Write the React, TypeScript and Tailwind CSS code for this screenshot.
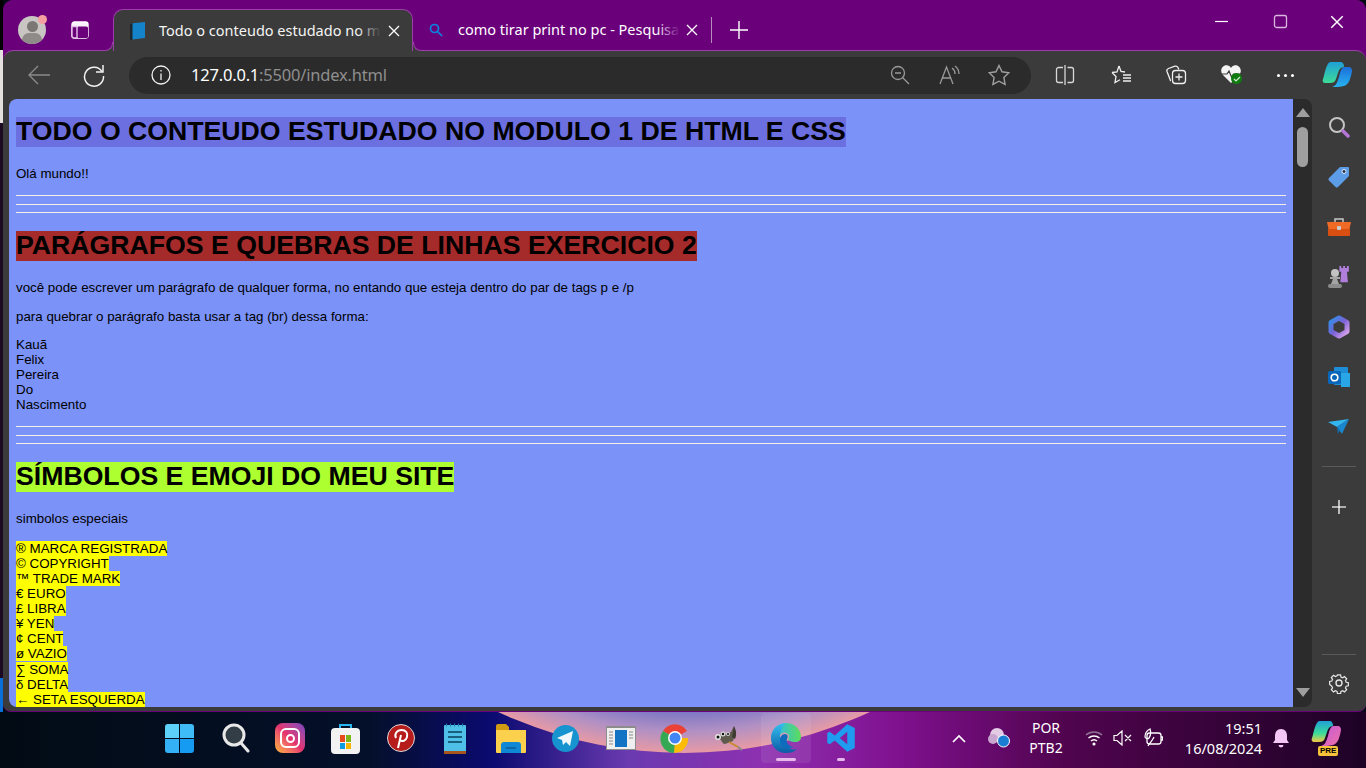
import React from 'react';

const arial = 'font-["Liberation_Sans",Arial,sans-serif]';
const segoe = 'font-["Noto_Sans","Open_Sans",sans-serif]';

const symbols = [
  { text: '® MARCA REGISTRADA' },
  { text: '© COPYRIGHT' },
  { text: '™ TRADE MARK' },
  { text: '€ EURO' },
  { text: '£ LIBRA' },
  { text: '¥ YEN' },
  { text: '¢ CENT' },
  { text: 'ø VAZIO' },
  { text: '∑ SOMA', gap: true },
  { text: 'δ DELTA' },
  { text: '← SETA ESQUERDA' }
];

function TripleRule() {
  return (
    <div className="flex flex-col">
      <div className="h-px bg-[#f4f1e8]" />
      <div className="mt-[8px] h-px bg-[#f4f1e8]" />
      <div className="mt-[7px] h-px bg-[#f4f1e8]" />
    </div>
  );
}

function Heading({ className, children }: { className: string; children: React.ReactNode }) {
  return <h1 className={`w-fit pb-[2px] text-[26.67px] leading-[28px] font-bold text-black ${className}`}>{children}</h1>;
}

function Close({ size = 14 }: { size?: number }) {
  return (
    <svg width={size} height={size} viewBox="0 0 14 14" fill="none" stroke="#fff" strokeWidth="1.3" className="shrink-0">
      <path d="M2 2l10 10M12 2L2 12" />
    </svg>
  );
}

function TabStrip() {
  return (
    <div className="relative z-10 flex h-[50px] shrink-0 items-end bg-[#6b007b]">
      <div className="flex h-[50px] w-[110px] shrink-0 items-center gap-[26px] pl-[15px] pt-[10px]">
        <div className="relative h-7 w-7 shrink-0">
          <div className="relative h-7 w-7 overflow-hidden rounded-full bg-[#c9c5c3]">
            <div className="absolute left-[9px] top-[5px] h-[11px] w-[11px] rounded-full bg-[#7b7775]" />
            <div className="absolute left-[4px] top-[17px] h-[14px] w-[20px] rounded-full bg-[#8f8b89]" />
          </div>
          <div className="absolute -right-[1px] -top-[1px] h-[9px] w-[9px] rounded-full bg-[#f4a0a0]" />
        </div>
        <svg width="18" height="18" viewBox="0 0 18 18" fill="none" strokeWidth="1.4" className="-ml-[1px] shrink-0">
          <rect x="1" y="1" width="16" height="16" rx="2.5" stroke="#fff" fill="#f8f0fa" />
          <rect x="6" y="5.5" width="11" height="11.500" rx="1.500" fill="#6b007b" />
          <path d="M1 5.500V15a2 2 0 0 0 2 2h3V5.500z" fill="#6b007b" stroke="#e6c4ea" />
        </svg>
      </div>
      <div className="relative -mb-px flex h-[42px] w-[300px] shrink-0 items-center rounded-t-[10px] border-x border-t border-[#9a3fa8] bg-[#3b3b3b] pl-[15px]">
        <div className="absolute -left-[9px] bottom-0 h-[9px] w-[8px] bg-[#3b3b3b]">
          <div className="h-full w-full rounded-br-[8px] border-r border-b border-[#9a3fa8] bg-[#6b007b]" />
        </div>
        <div className="absolute -right-[9px] bottom-0 h-[9px] w-[8px] bg-[#3b3b3b]">
          <div className="h-full w-full rounded-bl-[8px] border-l border-b border-[#9a3fa8] bg-[#6b007b]" />
        </div>
        <svg width="17" height="20" viewBox="0 0 17 20" className="shrink-0">
          <path d="M1 3.500L4 2v16l-3 1.500z" fill="#1d2730" />
          <path d="M3.500 2.200L16 1v16L3.500 18.500z" fill="#1583c9" />
        </svg>
        <div className={`relative ml-[13px] w-[219px] shrink-0 whitespace-nowrap text-[14.5px] text-[#f4f4f4] ${segoe}`}>
          Todo o conteudo estudado no m
          <div className="absolute inset-y-0 -right-[3px] w-[24px] bg-gradient-to-l from-[#3b3b3b] to-transparent" />
        </div>
        <span className="ml-[9px]">
          <Close />
        </span>
      </div>
      <div className="flex h-[41px] shrink-0 items-center pl-[16px]">
        <svg width="14" height="14" viewBox="0 0 14 14" fill="none" stroke="#0a84e0" strokeWidth="1.700" className="shrink-0">
          <circle cx="5.500" cy="5.500" r="4" />
          <path d="M8.500 8.500L13 13" />
        </svg>
        <div className={`relative ml-[15px] w-[219px] shrink-0 whitespace-nowrap text-[14.5px] text-white ${segoe}`}>
          como tirar print no pc - Pesquisa
          <div className="absolute inset-y-0 -right-[3px] w-[24px] bg-gradient-to-l from-[#6b007b] to-transparent" />
        </div>
        <span className="ml-[8px]">
          <Close />
        </span>
        <div className="ml-[12px] h-[26px] w-px bg-[#b98ac0]" />
        <svg width="18" height="18" viewBox="0 0 18 18" stroke="#fff" strokeWidth="1.400" className="ml-[18px] shrink-0">
          <path d="M9 0v18M0 9h18" />
        </svg>
      </div>
      <div className="flex h-[50px] flex-1 items-start justify-end pr-[21px] pt-[14px]">
        <svg width="16" height="16" viewBox="0 0 16 16" stroke="#fff" strokeWidth="1.200">
          <path d="M2 7.500h13" />
        </svg>
        <svg width="16" height="16" viewBox="0 0 16 16" fill="none" stroke="#d9b6de" strokeWidth="1.300" className="ml-[44px]">
          <rect x="1.500" y="1.500" width="12" height="12" rx="2" />
        </svg>
        <span className="ml-[40px]">
          <Close size={16} />
        </span>
      </div>
    </div>
  );
}

function Toolbar() {
  return (
    <div className="flex h-[49px] shrink-0 items-center rounded-t-[10px] border-t border-[#9a3fa8] bg-[#3b3b3b] pr-[12px]">
      <svg width="24" height="24" viewBox="0 0 24 24" fill="none" stroke="#8a8a8a" strokeWidth="1.400" className="ml-[24px] shrink-0">
        <path d="M23 12H2M11 3l-9 9 9 9" />
      </svg>
      <svg width="24" height="24" viewBox="0 0 24 24" fill="none" stroke="#f2f2f2" strokeWidth="1.500" className="ml-[31px] shrink-0">
        <path d="M20 8.500A9.500 9.500 0 1 0 21.500 13" />
        <path d="M21 2v7h-7" />
      </svg>
      <div className="ml-[23px] flex h-[37px] w-[902px] shrink-0 items-center rounded-full bg-[#2b2b2b] pl-[22px]">
        <svg width="20" height="20" viewBox="0 0 20 20" fill="none" stroke="#f2f2f2" strokeWidth="1.300" className="shrink-0">
          <circle cx="10" cy="10" r="9" />
          <path d="M10 8.500V15M10 5v1.500" />
        </svg>
        <div className={`ml-[20px] text-[16.5px] tracking-[-0.2px] ${segoe}`}>
          <span className="text-white">127.0.0.1</span>
          <span className="text-[#8f8f8f]">:5500/index.html</span>
        </div>
        <svg width="20" height="20" viewBox="0 0 20 20" fill="none" stroke="#9a9a9a" strokeWidth="1.300" className="ml-auto shrink-0">
          <circle cx="8" cy="8" r="6.500" />
          <path d="M12.500 12.500L19 19M5 8h6" />
        </svg>
        <svg width="22" height="22" viewBox="0 0 22 22" fill="none" stroke="#9a9a9a" strokeWidth="1.300" className="ml-[29px] shrink-0">
          <path d="M1 20L7.500 3 14 20M3.500 14h8M13 4a7 7 0 0 1 3 6M16 2a10 10 0 0 1 4 8" />
        </svg>
        <svg width="22" height="22" viewBox="0 0 22 22" fill="none" stroke="#a0a0a0" strokeWidth="1.400" className="ml-[27px] mr-[21px] shrink-0">
          <path d="M11 1.500l3 6.300 6.900.9-5 4.800 1.200 6.900L11 17.200l-6.100 3.200 1.200-6.900-5-4.800 6.900-.9z" />
        </svg>
      </div>
      <svg width="20" height="20" viewBox="0 0 20 20" fill="none" stroke="#d8d8d8" strokeWidth="1.300" className="ml-[24px] shrink-0">
        <path d="M8 2.500H3.500a2 2 0 0 0-2 2v11a2 2 0 0 0 2 2H8M12.500 2.500h4a2 2 0 0 1 2 2v11a2 2 0 0 1-2 2h-4M10 0v20" />
      </svg>
      <svg width="22" height="22" viewBox="0 0 22 22" fill="none" stroke="#f0f0f0" strokeWidth="1.300" className="ml-[35px] shrink-0">
        <path d="M9 2l2 5.500 4 .5M2 8.500l5-.6L9 2M2 8.500l4 4-1 6 5-2.800M13 11h8M13 14h8M13 17h8" />
      </svg>
      <svg width="22" height="22" viewBox="0 0 22 22" fill="none" stroke="#f0f0f0" strokeWidth="1.300" className="ml-[33px] shrink-0">
        <path d="M6 16.500H5.500L2 7.500c-.5-1.500.2-2.500 1.500-3L10 2.200c1.300-.4 2.300 0 3 1.300l.8 2" />
        <rect x="7.500" y="6.500" width="13" height="13" rx="3" />
        <path d="M14 9.500v7M10.500 13h7" />
      </svg>
      <div className="relative ml-[33px] h-[22px] w-[24px] shrink-0">
        <svg width="22" height="20" viewBox="0 0 22 20">
          <path d="M11 19L2.500 10.500C-1 6 3 0 8 1.500 9.500 2 10.500 3 11 4c.5-1 1.500-2 3-2.500C19 0 23 6 19.500 10.500z" fill="#f4f4f4" />
          <path d="M1 10h6l2-3 2.500 6 2-3h7" fill="none" stroke="#3b3b3b" strokeWidth="1.200" />
        </svg>
        <div className="absolute left-[11px] top-[9px] flex h-[11px] w-[11px] items-center justify-center rounded-full bg-[#107c10]">
          <svg width="8" height="8" viewBox="0 0 8 8" fill="none" stroke="#cfe9cf" strokeWidth="1.200">
            <path d="M1 4l2 2 4-4" />
          </svg>
        </div>
      </div>
      <div className="ml-[33px] flex shrink-0 gap-[4px]">
        <div className="h-[3px] w-[3px] rounded-full bg-white" />
        <div className="h-[3px] w-[3px] rounded-full bg-white" />
        <div className="h-[3px] w-[3px] rounded-full bg-white" />
      </div>
      <svg width="30" height="28" viewBox="0 0 30 28" className="ml-[28px] shrink-0">
        <defs>
          <linearGradient id="cpA" x1="0" y1="0" x2="0" y2="1">
            <stop offset="0" stopColor="#1f9fd8" />
            <stop offset="1" stopColor="#3ddc97" />
          </linearGradient>
          <linearGradient id="cpB" x1="0" y1="0" x2="0" y2="1">
            <stop offset="0" stopColor="#1c6fdc" />
            <stop offset="1" stopColor="#27b3ee" />
          </linearGradient>
        </defs>
        <path d="M22 6h5c2 0 3 2 3 4-1 6-3 14-8 15-3 1-9 1-12 1 4-1 5-4 7-10 1-4 2-9 5-10z" fill="url(#cpB)" />
        <path d="M8 1h10c3 0 4 2 4 5-3 0-5 2-6 6l-2 6c-1 3-3 4-6 4H3c-2 0-3-2-2-4C3 12 4 3 8 1z" fill="url(#cpA)" />
      </svg>
    </div>
  );
}

function Page() {
  return (
    <div className={`flex-1 overflow-hidden rounded-l-[8px] bg-[#7b92f8] pl-[7px] pr-[7px] pt-[18px] text-[13.33px] leading-[15px] text-black ${arial}`}>
      <Heading className="bg-[#6b6fe0]">TODO O CONTEUDO ESTUDADO NO MODULO 1 DE HTML E CSS</Heading>
      <p className="mt-[19px]">Olá mundo!!</p>
      <div className="mt-[14px]">
        <TripleRule />
      </div>
      <Heading className="mt-[18px] bg-[#a52a2a]">PARÁGRAFOS E QUEBRAS DE LINHAS EXERCICIO 2</Heading>
      <p className="mt-[19px]">você pode escrever um parágrafo de qualquer forma, no entando que esteja dentro do par de tags p e /p</p>
      <p className="mt-[14px]">para quebrar o parágrafo basta usar a tag (br) dessa forma:</p>
      <p className="mt-[13px]">
        Kauã
        <br />
        Felix
        <br />
        Pereira
        <br />
        Do
        <br />
        Nascimento
      </p>
      <div className="mt-[14px]">
        <TripleRule />
      </div>
      <Heading className="mt-[18px] bg-[#adff2f]">SÍMBOLOS E EMOJI DO MEU SITE</Heading>
      <p className="mt-[19px]">simbolos especiais</p>
      <div className="mt-[15px] flex flex-col items-start">
        {symbols.map((item) => (
          <span key={item.text} className={item.gap ? 'mt-px bg-[#ffff00]' : 'bg-[#ffff00]'}>
            {item.text}
          </span>
        ))}
      </div>
    </div>
  );
}

function Scrollbar() {
  return (
    <div className="flex w-[19px] shrink-0 flex-col items-center rounded-r-[8px] bg-[#2b2b2b] pt-[9px]">
      <div className="h-0 w-0 border-x-[7px] border-b-[9px] border-x-transparent border-b-[#9e9e9e]" />
      <div className="mt-[10px] h-[40px] w-[11px] rounded-full bg-[#9f9f9f]" />
      <div className="mt-auto mb-[10px] h-0 w-0 border-x-[7px] border-t-[9px] border-x-transparent border-t-[#9e9e9e]" />
    </div>
  );
}

function SidebarIcon({ children }: { children: React.ReactNode }) {
  return <div className="flex h-[50px] shrink-0 items-center justify-center">{children}</div>;
}

function Sidebar() {
  return (
    <div className="flex w-[54px] shrink-0 flex-col bg-[#3b3b3b] pt-[3px]">
      <SidebarIcon>
        <svg width="22" height="22" viewBox="0 0 22 22" fill="none">
          <circle cx="9" cy="9" r="7" stroke="#c4c4c4" strokeWidth="2" />
          <path d="M15 15l5 5" stroke="#b475d6" strokeWidth="3.500" strokeLinecap="round" />
        </svg>
      </SidebarIcon>
      <SidebarIcon>
        <svg width="24" height="24" viewBox="0 0 24 24">
          <path d="M13 2h8c1 0 1 1 1 1v8L11 22c-1 .8-1.500.8-2.500 0L2 15.500c-.8-1-.8-1.500 0-2.500z" fill="#5d9de8" />
          <circle cx="17" cy="6.500" r="2" fill="#22304a" stroke="#e8f0fa" />
        </svg>
      </SidebarIcon>
      <SidebarIcon>
        <svg width="24" height="20" viewBox="0 0 24 20">
          <path d="M8 5V2h8v3" fill="none" stroke="#c9c9c9" strokeWidth="1.500" />
          <path d="M0 5h24l-1.500 7h-21z" fill="#ef6a24" />
          <path d="M1 12h22v6a1 1 0 0 1-1 1H2a1 1 0 0 1-1-1z" fill="#d94f12" />
          <rect x="10" y="9" width="4" height="4" rx="1" fill="#c9c9c9" />
        </svg>
      </SidebarIcon>
      <SidebarIcon>
        <svg width="24" height="24" viewBox="0 0 24 24">
          <circle cx="8" cy="8" r="4" fill="#c2c2c2" />
          <path d="M3 12h10v2H3zM6 14h4l2 5H4z" fill="#a4a4a4" />
          <rect x="1" y="19" width="14" height="4" rx="2" fill="#8c8c8c" />
          <path d="M13 0h2v2h2V0h2v2h2V0h2v6h-2l1 11H14l1-11h-2z" fill="#b07fdc" transform="translate(0 1) scale(.95)" />
        </svg>
      </SidebarIcon>
      <SidebarIcon>
        <svg width="22" height="24" viewBox="0 0 22 24" fill="none">
          <defs>
            <linearGradient id="m365" x1="0" y1="0" x2="1" y2="1">
              <stop offset="0" stopColor="#2f8fe8" />
              <stop offset=".5" stopColor="#7b61d8" />
              <stop offset="1" stopColor="#e0a8ec" />
            </linearGradient>
          </defs>
          <path d="M11 3l8 4.500v9L11 21l-8-4.500v-9z" stroke="url(#m365)" strokeWidth="5" strokeLinejoin="round" />
        </svg>
      </SidebarIcon>
      <SidebarIcon>
        <svg width="22" height="20" viewBox="0 0 22 20">
          <rect x="6" y="0" width="14" height="18" rx="1" fill="#1c8dd6" />
          <rect x="13" y="6" width="9" height="14" fill="#29a6e6" />
          <rect x="0" y="4" width="13" height="13" rx="1.500" fill="#0a66b8" />
          <circle cx="6.500" cy="10.500" r="3.300" fill="none" stroke="#fff" strokeWidth="1.600" />
        </svg>
      </SidebarIcon>
      <SidebarIcon>
        <svg width="22" height="16" viewBox="0 0 22 16">
          <path d="M0 3l21-3-12 8z" fill="#33b5ef" />
          <path d="M21 0L14 15 9 8z" fill="#1887cf" />
          <path d="M9 8l1 7 2-4z" fill="#0f6fb0" />
        </svg>
      </SidebarIcon>
      <div className="mx-[10px] mt-[14px] h-px shrink-0 bg-[#5a5a5a]" />
      <div className="mt-[32px] flex justify-center">
        <svg width="16" height="16" viewBox="0 0 16 16" strokeWidth="1.300">
          <path d="M1 8h14" stroke="#b0b0b0" strokeWidth="2" />
          <path d="M8 1v14" stroke="#fff" />
        </svg>
      </div>
      <div className="mx-[10px] mt-auto h-px shrink-0 bg-[#5a5a5a]" />
      <div className="flex h-[52px] shrink-0 items-center justify-center pt-[4px]">
        <svg width="22" height="22" viewBox="0 0 22 22" fill="none" stroke="#e4e4e4" strokeWidth="1.400">
          <circle cx="11" cy="11" r="3" />
          <path d="M9.300 2h3.400l.5 2.400 1.800.8 2.100-1.300 2.400 2.400-1.300 2.100.8 1.800 2.400.5v3.400l-2.400.5-.8 1.800 1.300 2.100-2.400 2.400-2.100-1.300-1.800.8-.5 2.400H9.300l-.5-2.400-1.800-.8-2.100 1.300-2.400-2.400 1.300-2.100-.8-1.800L.6 12.700V9.300L3 8.800l.8-1.800-1.300-2.100 2.400-2.400L7 3.800l1.800-.8z" transform="translate(1.100 1.100) scale(.9)" />
        </svg>
      </div>
    </div>
  );
}

function TaskbarIcons() {
  return (
    <div className="flex items-center">
      <div className="flex w-[56px] justify-center">
        <div className="grid h-[29px] w-[29px] grid-cols-2 gap-[1px]">
          <div className="rounded-tl-[3px] bg-[#5ed1fb]" />
          <div className="rounded-tr-[3px] bg-[#3fbcf8]" />
          <div className="rounded-bl-[3px] bg-[#34b0f6]" />
          <div className="rounded-br-[3px] bg-[#169bf2]" />
        </div>
      </div>
      <div className="flex w-[58px] justify-center">
        <svg width="28" height="30" viewBox="0 0 28 30" fill="none">
          <circle cx="12" cy="12" r="10" fill="#333d46" stroke="#e8e8e8" strokeWidth="3" />
          <path d="M19 20l7 8" stroke="#e8e8e8" strokeWidth="3" strokeLinecap="round" />
        </svg>
      </div>
      <div className="flex w-[50px] justify-center">
        <div className="flex h-[30px] w-[30px] shrink-0 items-center justify-center rounded-[8px] bg-gradient-to-tr from-[#fdb32a] via-[#e5306e] to-[#7a3fc4]">
          <div className="flex h-[20px] w-[20px] items-center justify-center rounded-[6px] border-2 border-white">
            <div className="h-[9px] w-[9px] rounded-full border-2 border-white" />
          </div>
        </div>
      </div>
      <div className="flex w-[60px] justify-center">
        <svg width="29" height="31" viewBox="0 0 29 31">
          <path d="M9 6V2h11v4" fill="none" stroke="#2bb5ee" strokeWidth="2" />
          <rect x="0" y="5" width="29" height="26" rx="4" fill="#f2f2f2" />
          <rect x="9" y="12" width="5" height="7" fill="#e8491d" />
          <rect x="15" y="12" width="5" height="7" fill="#7cb518" />
          <rect x="9" y="20" width="5" height="6" fill="#0f9be0" />
          <rect x="15" y="20" width="5" height="6" fill="#f7b500" />
        </svg>
      </div>
      <div className="flex w-[52px] justify-center">
        <svg width="28" height="28" viewBox="0 0 28 28">
          <circle cx="14" cy="14" r="13.500" fill="#b71c1c" stroke="#d8d8d8" />
          <path d="M11 24l3-13M9 14c-2-4 1-8 5.500-8S21 9 20 13s-5 5-7 3" fill="none" stroke="#fff" strokeWidth="2" />
        </svg>
      </div>
      <div className="flex w-[56px] justify-center">
        <svg width="22" height="31" viewBox="0 0 22 31">
          <rect x="0" y="2" width="22" height="29" rx="1" fill="#4fc0e8" />
          <rect x="0" y="28" width="22" height="3" fill="#a8561e" />
          <path d="M4 9h14M4 14h14M4 19h14" stroke="#17617f" strokeWidth="2" />
          <path d="M2 2h1M6 2h1M10 2h1M14 2h1M18 2h1" stroke="#1d7fa8" strokeWidth="3" />
        </svg>
      </div>
      <div className="flex w-[56px] justify-center">
        <svg width="30" height="29" viewBox="0 0 30 29">
          <path d="M0 2a2 2 0 0 1 2-2h8l3 3v4H0z" fill="#d09a12" />
          <path d="M0 6h30v22a1 1 0 0 1-1 1H1a1 1 0 0 1-1-1z" fill="#fbd04c" />
          <path d="M5 29v-8a3 3 0 0 1 3-3h14a3 3 0 0 1 3 3v8z" fill="#0e88d4" />
          <path d="M10 24h10" stroke="#0a5c94" strokeWidth="1.500" />
        </svg>
      </div>
      <div className="flex w-[52px] justify-center">
        <div className="flex h-[27px] w-[27px] shrink-0 items-center justify-center rounded-full bg-[#1794d0]">
          <svg width="16" height="15" viewBox="0 0 16 15">
            <path d="M0 7L16 0l-3 15-4-4-3 3-1-5z" fill="#f0f8fc" />
          </svg>
        </div>
      </div>
      <div className="flex w-[60px] justify-center">
        <svg width="30" height="24" viewBox="0 0 30 24">
          <rect x=".5" y=".5" width="29" height="23" fill="#efefef" stroke="#8c8c8c" />
          <rect x="0" y="0" width="30" height="2" fill="#8c8c8c" />
          <rect x="9" y="4" width="12" height="17" fill="#1272c4" />
          <path d="M3 6h4M3 9h4M3 12h4M3 15h4M3 18h4M23 6h4M23 9h4M23 12h4" stroke="#8a8a8a" strokeWidth="1.200" />
        </svg>
      </div>
      <div className="flex w-[48px] justify-center">
        <svg width="30" height="30" viewBox="0 0 30 30" className="shrink-0">
          <path d="M15 15L3 8a14 14 0 0 1 24 0z" fill="#ea4335" />
          <path d="M15 15H28a14 14 0 0 1-14 15z" fill="#fbbc05" />
          <path d="M15 15L3 8a14 14 0 0 0 11 22z" fill="#34a853" />
          <circle cx="15" cy="15" r="7" fill="#fff" />
          <circle cx="15" cy="15" r="5.500" fill="#4285f4" />
        </svg>
      </div>
      <div className="flex w-[62px] justify-center">
        <svg width="30" height="26" viewBox="0 0 30 26">
          <path d="M1 12l5-3 5 0 5-2 3-6 1 9-2 6-8 3c-2 0-3-2-4-4z" fill="#5f5a4e" />
          <path d="M19 1c2 4 3 8 1 13l-3-2z" fill="#3f3b33" />
          <circle cx="3" cy="12" r="3" fill="#e4e4e4" />
          <circle cx="3" cy="12" r="1.500" fill="#111" />
          <circle cx="8" cy="9" r="2.500" fill="#d8d8d8" />
          <circle cx="8" cy="9" r="1.200" fill="#111" />
          <circle cx="13" cy="9" r="2" fill="#d8d8d8" />
          <circle cx="13" cy="9" r="1" fill="#111" />
          <path d="M14 17l9 5" stroke="#c8892c" strokeWidth="2" />
          <path d="M23 22l4 3" stroke="#888" strokeWidth="2" />
        </svg>
      </div>
      <div className="relative flex h-[50px] w-[50px] justify-center rounded-[4px] bg-[#ffffff14] pt-[10px]">
        <svg width="30" height="30" viewBox="0 0 30 30">
          <defs>
            <linearGradient id="edgeA" x1="0" y1="0" x2="0" y2="1">
              <stop offset="0" stopColor="#35c1f1" />
              <stop offset="1" stopColor="#0c59a4" />
            </linearGradient>
            <linearGradient id="edgeB" x1="0" y1="0" x2="1" y2="0">
              <stop offset="0" stopColor="#35c1d0" />
              <stop offset="1" stopColor="#5ddc5a" />
            </linearGradient>
          </defs>
          <path d="M15 0C6 0 0 7 0 15c0 9 7 15 15 15 4 0 8-1 11-4-4 1-9 0-11-3-2-4-1-7 2-9H9C9 9 12 6 15 4z" fill="url(#edgeA)" />
          <path d="M15 0c8 0 15 6 15 14 0 3-2 5-6 5-3 0-7-1-7-3 2-2 1-5-2-6-2-1-4 0-6 2C10 6 12 1 15 0z" fill="url(#edgeB)" />
          <path d="M9 17c0-3 2-6 5-6 3 0 3 3 2 5-1 3 1 7 6 8-3 3-13 2-13-7z" fill="#0f6cbd" />
        </svg>
        <div className="absolute bottom-[2px] left-[15px] h-[3px] w-[20px] rounded-full bg-[#e6b8ec]" />
      </div>
      <div className="relative flex h-[50px] w-[60px] justify-center pt-[10px]">
        <svg width="30" height="30" viewBox="0 0 24 24">
          <path d="M17 1l6 3v16l-6 3-10-9-4 3-2-1V8l2-1 4 3zM17 7l-6 5 6 5z" fill="#1f9cf0" fillRule="evenodd" />
        </svg>
        <div className="absolute bottom-[2px] left-[26px] h-[3px] w-[8px] rounded-full bg-[#e6b8ec]" />
      </div>
    </div>
  );
}

function Tray() {
  return (
    <div className={`absolute right-[25px] top-0 flex h-full items-center pb-[4px] text-white ${segoe}`}>
      <svg width="14" height="9" viewBox="0 0 14 9" fill="none" stroke="#fff" strokeWidth="1.700">
        <path d="M1 8l6-6 6 6" />
      </svg>
      <svg width="22" height="20" viewBox="0 0 22 20" className="ml-[22px]">
        <circle cx="9" cy="7" r="7" fill="#e3cbe6" />
        <circle cx="5" cy="11" r="5" fill="#c8a6cf" />
        <circle cx="15.500" cy="13" r="6" fill="#1a7fd4" stroke="#fff" />
      </svg>
      <div className="ml-[13px] flex w-[46px] flex-col items-center text-[14px] leading-[20px]">
        <span>POR</span>
        <span>PTB2</span>
      </div>
      <svg width="18" height="16" viewBox="0 0 18 16" fill="none" stroke="#fff" strokeWidth="1.500" className="ml-[16px]">
        <path d="M1 5a12 12 0 0 1 16 0" stroke="#8f6f96" />
        <path d="M3.500 8a8.500 8.500 0 0 1 11 0M6 11a4.500 4.500 0 0 1 6 0" />
        <circle cx="9" cy="14" r=".8" />
      </svg>
      <svg width="20" height="16" viewBox="0 0 20 16" fill="none" stroke="#fff" strokeWidth="1.200" className="ml-[10px]">
        <path d="M1 5.500h3L9 1v14l-5-4.500H1zM12 5l6 6M18 5l-6 6" />
      </svg>
      <svg width="20" height="20" viewBox="0 0 20 20" fill="none" stroke="#fff" strokeWidth="1.300" className="ml-[10px]">
        <rect x="4" y="5" width="14" height="11" rx="2.500" />
        <path d="M18 9h1.500v3H18M5 18c2-3 4-5 6-9M2 9c0-4 3-7 5-8 1 3 1 6-1 9-1 1-3 1-4-1z" />
      </svg>
      <div className="ml-[21px] flex w-[78px] flex-col items-end text-[14.5px] leading-[20px]">
        <span>19:51</span>
        <span>16/08/2024</span>
      </div>
      <svg width="18" height="20" viewBox="0 0 18 20" className="ml-[10px]">
        <path d="M9 1c4 0 6 3 6 7v4l2 3H1l2-3V8c0-4 2-7 6-7z" fill="#f3c6f5" />
        <path d="M6.500 17h5a2.500 2.500 0 0 1-5 0z" fill="#f3c6f5" />
      </svg>
      <div className="relative ml-[21px] h-[36px] w-[30px]">
        <svg width="30" height="28" viewBox="0 0 30 28">
          <defs>
            <linearGradient id="cpC" x1="0" y1="0" x2="0" y2="1">
              <stop offset="0" stopColor="#1f9fd8" />
              <stop offset=".6" stopColor="#3ddc97" />
              <stop offset="1" stopColor="#f7c744" />
            </linearGradient>
            <linearGradient id="cpD" x1="0" y1="0" x2="1" y2="1">
              <stop offset="0" stopColor="#c25bd6" />
              <stop offset="1" stopColor="#ef6fa8" />
            </linearGradient>
          </defs>
          <path d="M22 6h5c2 0 3 2 3 4-1 6-3 14-8 15-3 1-9 1-12 1 4-1 5-4 7-10 1-4 2-9 5-10z" fill="url(#cpD)" />
          <path d="M8 1h10c3 0 4 2 4 5-3 0-5 2-6 6l-2 6c-1 3-3 4-6 4H3c-2 0-3-2-2-4C3 12 4 3 8 1z" fill="url(#cpC)" />
        </svg>
        <span className={`absolute bottom-0 left-[7px] rounded-[2px] bg-[#f6c33b] px-[2px] text-[8px] leading-[10px] font-bold text-black ${arial}`}>PRE</span>
      </div>
    </div>
  );
}

function Taskbar() {
  return (
    <div className="relative flex-1 overflow-hidden bg-[#020b14]">
      <svg className="absolute inset-0" width="1366" height="56" viewBox="0 0 1366 56">
        <defs>
          <linearGradient id="wall" x1="0" y1="0" x2="1366" y2="0" gradientUnits="userSpaceOnUse">
            <stop offset="0" stopColor="#020b14" />
            <stop offset=".27" stopColor="#04102a" />
            <stop offset=".36" stopColor="#0a0a70" />
            <stop offset=".46" stopColor="#6a3ab0" />
            <stop offset=".56" stopColor="#8e30b0" />
            <stop offset=".66" stopColor="#7f108e" />
            <stop offset=".78" stopColor="#50044e" />
            <stop offset="1" stopColor="#1d0225" />
          </linearGradient>
          <radialGradient id="arc" cx="684" cy="-401" r="442" gradientUnits="userSpaceOnUse">
            <stop offset=".88" stopColor="#5f68c4" />
            <stop offset=".95" stopColor="#b090c4" />
            <stop offset="1" stopColor="#e89aa4" />
          </radialGradient>
        </defs>
        <rect width="1366" height="56" fill="url(#wall)" />
        <circle cx="684" cy="-401" r="442" fill="url(#arc)" />
      </svg>
      <div className="relative flex h-full items-center pb-[4px] pl-[151px]">
        <TaskbarIcons />
      </div>
      <Tray />
    </div>
  );
}

export default function App() {
  return (
    <div className="flex h-[768px] w-[1366px] flex-col overflow-hidden bg-[#020b14]">
      <div className="flex h-[712px] shrink-0">
        <div className="flex w-[3px] shrink-0 flex-col">
          <div className="h-[50px] bg-black" />
          <div className="h-[73px] bg-[#e4e0e0]" />
          <div className="flex-1 bg-[#1c0a22]" />
          <div className="h-[34px] bg-[#0a6fd8]" />
        </div>
        <div className="flex min-w-0 flex-1 flex-col overflow-hidden rounded-t-[10px] rounded-b-[8px] border-b border-[#6b007b] bg-[#6b007b]">
          <TabStrip />
          <Toolbar />
          <div className="flex min-h-0 flex-1 bg-[#3b3b3b] pb-[4px] pl-[6px]">
            <Page />
            <Scrollbar />
            <Sidebar />
          </div>
        </div>
      </div>
      <Taskbar />
    </div>
  );
}
